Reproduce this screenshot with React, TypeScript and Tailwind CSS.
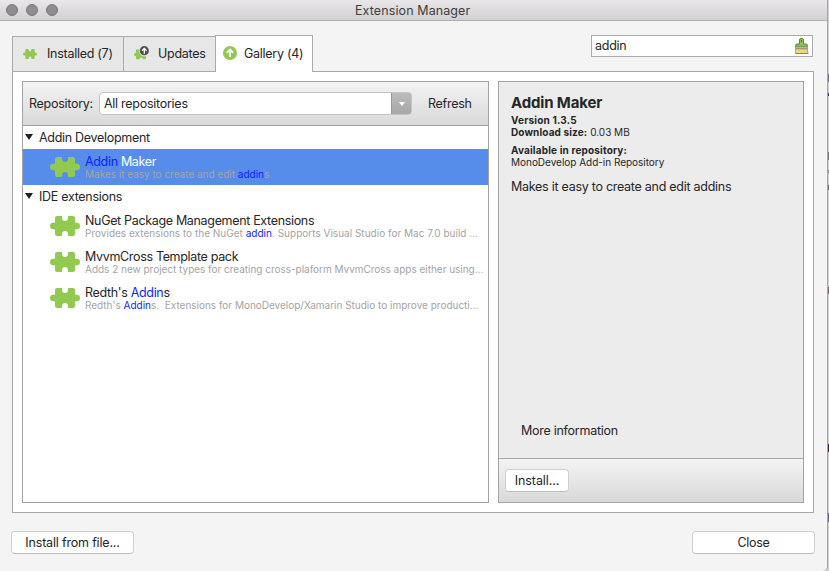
import type { ReactNode } from 'react';

function Puzzle({ className }: { className: string }) {
  return (
    <svg viewBox="0 0 30 20" preserveAspectRatio="none" className={className} fill="#92c951">
      <path d="M7 0H11.5C12.3 0 12 1 12.1 2A2.9 2.9 0 0 0 17.9 2C18 1 17.7 0 18.5 0H23Q25 0 25 2V5.5C25 7 25.7 6.8 26.8 6.8A3.2 3.2 0 0 1 26.8 13.2C25.7 13.2 25 13 25 14.5V18Q25 20 23 20H18.5C17.7 20 18 19 17.9 18A2.9 2.9 0 0 0 12.1 18C12 19 12.3 20 11.5 20H7Q5 20 5 18V14.5C5 13 4.3 13.2 3.2 13.2A3.2 3.2 0 0 1 3.2 6.8C4.3 6.8 5 7 5 5.5V2Q5 0 7 0Z" />
    </svg>
  );
}

function UpdatesIcon() {
  return (
    <svg viewBox="0 0 16 16" className="h-4 w-4 shrink-0">
      <path fill="#92c951" d="M2 4Q2 3.200 3 3.200H4.800Q5 8 7.500 9.500Q9.500 10.800 12 10V11.500Q12 13.200 11 13.200H9Q8.600 11.500 7.300 11.500T5.500 13.200H3Q2 13.200 2 12V10.200Q0 10.400 0 8.500T2 6.800Z" />
      <circle cx="10.300" cy="4.700" r="4.600" fill="#505050" />
      <path fill="none" stroke="#fff" strokeWidth="1.300" d="M10.300 7.800V2.500M8 4.700L10.300 2.400L12.600 4.700" />
    </svg>
  );
}

function GalleryIcon() {
  return (
    <svg viewBox="0 0 14 14" className="mb-[2px] h-[14px] w-[14px] shrink-0">
      <circle cx="7" cy="7" r="7" fill="#92c951" />
      <path fill="none" stroke="#fff" strokeWidth="2" d="M7 11V4M3.900 6.800L7 3.700L10.100 6.800" />
    </svg>
  );
}

function BrushIcon() {
  return (
    <svg viewBox="0 0 14 16" className="h-4 w-[14px] shrink-0">
      <path d="M4.500 6V2Q4.500 .5 6 .5H7Q8.500 .5 8.500 2V6H11Q12.500 6 12.500 7.500V8.500H.5V7.500Q.5 6 2 6Z" fill="#8fbf55" stroke="#569126" />
      <rect x="6" y="2" width="1" height="2" fill="#3f7a16" />
      <rect x="0" y="8.500" width="13" height="2.500" fill="#9a9d97" />
      <rect x="1" y="9" width="11" height=".8" fill="#c0c3bc" />
      <path d="M.8 11H12.200L13 15.500H.5Z" fill="#efdf8c" stroke="#b18a3a" strokeWidth=".8" />
      <path d="M3 13V14.500M5 12V14M7 13V14.500M9 12V14M11 13V14.500" stroke="#d9b95c" strokeWidth=".6" />
      <path d="M.5 15.600H13.500" stroke="#9b7422" strokeWidth=".8" />
    </svg>
  );
}

function Hit({ children }: { children: ReactNode }) {
  return <span className="text-[#0f1fff]">{children}</span>;
}

function Group({ label }: { label: string }) {
  return (
    <div className="flex h-[23px] items-center pl-[2px] text-[12.5px]">
      <svg viewBox="0 0 8 6" className="mb-[2px] h-[6px] w-2"><path d="M0 0H8L4 6Z" fill="#222" /></svg>
      <span className="ml-[6px] pt-px tracking-[-0.3px]">{label}</span>
    </div>
  );
}

type ItemProps = { title: ReactNode; text: ReactNode; textClass: string; selected?: boolean };

function Item({ title, text, textClass, selected }: ItemProps) {
  return (
    <div className={`flex h-9 items-start pl-[27px] ${selected ? 'bg-[#568dea] text-white' : ''}`}>
      <Puzzle className="mt-2 h-5 w-[30px] shrink-0" />
      <div className="ml-[5px] pt-[5px]">
        <div className="h-[14px] whitespace-pre text-[12.5px] leading-[15px] tracking-[-0.33px]">{title}</div>
        <div className={`h-3 whitespace-pre text-[10px] leading-3 text-[#a4a4a4] ${textClass}`}>{text}</div>
      </div>
    </div>
  );
}

const button = 'flex h-[23px] items-center justify-center rounded-[4px] border border-[#cfcfcf] border-b-[#bfbfbf] bg-white pt-px text-[12.5px]';

export default function App() {
  return (
    <div className="flex h-[571px] w-[829px] overflow-hidden bg-[#cfcfd2] font-['Inter','Liberation_Sans',sans-serif] text-[12.5px] tracking-[-0.27px] whitespace-nowrap text-[#262626]">
      <div className="flex w-[828px] flex-col rounded-br-[5px] border-r border-[#a6a6a8] bg-[#f4f4f4]">
        <header className="relative flex h-[21px] shrink-0 items-center gap-2 border-b border-[#b0aeb0] bg-linear-to-b from-[#e9e7ea] to-[#d2d0d3] pl-[6px]">
          <i className="h-3 w-3 rounded-full border border-[#78787b] bg-[#8e8e92]" />
          <i className="h-3 w-3 rounded-full border border-[#78787b] bg-[#8e8e92]" />
          <i className="h-3 w-3 rounded-full border border-[#78787b] bg-[#8e8e92]" />
          <h1 className="absolute left-[355px] top-[3px] leading-[15px] tracking-[0.1px] text-[#3d3d3d]">Extension Manager</h1>
        </header>

        <div className="z-10 flex h-[51px] shrink-0 items-end pl-3">
          <div className="flex h-9 w-[111px] items-center border border-r-0 border-[#aaa] bg-[#e7e7e7] pl-[10px]">
            <Puzzle className="h-[10px] w-[14px]" />
            <span className="ml-[10px] pt-px">Installed (7)</span>
          </div>
          <div className="flex h-9 w-[92px] items-center border border-r-0 border-[#aaa] bg-[#e7e7e7] pl-[10px]">
            <div><UpdatesIcon /></div>
            <span className="ml-2 pt-px">Updates</span>
          </div>
          <div className="flex h-[37px] w-[98px] items-center border border-b-0 border-[#aaa] bg-white pl-[7px]">
            <GalleryIcon />
            <span className="ml-[7px]">Gallery (4)</span>
          </div>
          <div className="mb-[15px] ml-[278px] flex h-[22px] w-[222px] items-center justify-between border border-[#aaa] bg-white pr-[3px] pl-[3px]">
            <span className="pt-px">addin</span>
            <BrushIcon />
          </div>
        </div>

        <main className="-mt-px ml-3 flex h-[442px] w-[802px] shrink-0 gap-[9px] border border-[#a9a9a9] bg-white p-[9px]">
          <section className="flex w-[467px] flex-col border border-[#a3a3a3] bg-white">
            <div className="flex h-11 shrink-0 items-center border-b border-[#a0a0a0] bg-linear-to-b from-[#f4f4f4] to-[#d9d9d9] pl-[6px]">
              <span className="w-[70px] pt-px">Repository:</span>
              <div className="flex h-[23px] w-[313px] overflow-hidden rounded-[4px] border border-[#c4c4c4] bg-white">
                <span className="flex flex-1 items-center pt-px pl-[4px]">All repositories</span>
                <span className="-my-px -mr-px flex w-[21px] items-center justify-center rounded-r-[4px] border border-[#999] bg-linear-to-b from-[#bcbcbc] to-[#a7a7a7]">
                  <svg viewBox="0 0 6 4" className="h-1 w-[6px]"><path d="M0 0H6L3 4Z" fill="#fff" /></svg>
                </span>
              </div>
              <span className="ml-4 pt-px">Refresh</span>
            </div>
            <Group label="Addin Development" />
            <Item selected title={<><Hit>Addin</Hit> Maker</>} text={<>Makes it easy to create and edit <Hit>addin</Hit>s</>} textClass="tracking-[-0.01px]" />
            <Group label="IDE extensions" />
            <Item title="NuGet Package Management Extensions" text={<>Provides extensions to the NuGet <Hit>addin</Hit>. Supports Visual Studio for Mac 7.0 build ...</>} textClass="tracking-[0.01px]" />
            <Item title="MvvmCross Template pack" text="Adds 2 new project types for creating cross-plaform MvvmCross apps either using..." textClass="tracking-[-0.02px]" />
            <Item title={<>Redth's <Hit>Addin</Hit>s</>} text={<>Redth's <Hit>Addin</Hit>s.  Extensions for MonoDevelop/Xamarin Studio to improve producti...</>} textClass="tracking-[-0.01px]" />
          </section>

          <section className="flex w-[306px] flex-col border border-[#a3a3a3] bg-[#ececec]">
            <div className="flex flex-1 flex-col pt-3 pl-3">
              <h2 className="text-[15px] leading-[18px] font-bold tracking-[-0.15px]">Addin Maker</h2>
              <div className="mt-[2px] text-[10px] leading-3 tracking-[0px]">
                <p className="font-bold tracking-[0.2px]">Version 1.3.5</p>
                <p><b className="tracking-[0.13px]">Download size:</b> 0.03 MB</p>
                <p className="mt-[6px] font-bold tracking-[0.16px]">Available in repository:</p>
                <p className="tracking-[-0.02px]">MonoDevelop Add-in Repository</p>
              </div>
              <p className="mt-[11px] leading-4">Makes it easy to create and edit addins</p>
              <p className="mt-auto mb-[19px] ml-[10px] leading-4">More information</p>
            </div>
            <footer className="flex h-11 items-center border-t border-[#a6a6a6] bg-linear-to-b from-[#f4f4f4] to-[#d9d9d9] pl-[6px]">
              <button className={`${button} w-16 tracking-[-0.1px]`}>Install...</button>
            </footer>
          </section>
        </main>

        <div className="mt-[18px] flex justify-between pr-3 pl-[11px]">
          <button className={`${button} w-[123px] tracking-[-0.18px]`}>Install from file...</button>
          <button className={`${button} w-[123px]`}>Close</button>
        </div>
      </div>
      <div className="flex w-px flex-col text-transparent">
        <i className="mt-[74px] h-[8px] bg-[#787390]" />
        <i className="mt-[11px] h-[3px] bg-[#51287d]" />
        <i className="mt-[56px] h-[8px] bg-[#77777b]" />
        <i className="mt-[10px] h-[3px] bg-[#929295]" />
        <i className="mt-[12px] h-[5px] bg-[#6b6b6e]" />
        <i className="mt-[97px] h-[7px] bg-[#75648a]" />
        <i className="mt-[150px] h-[8px] bg-[#412064]" />
        <i className="mt-[61px] h-[9px] bg-[#795e90]" />
      </div>
    </div>
  );
}
